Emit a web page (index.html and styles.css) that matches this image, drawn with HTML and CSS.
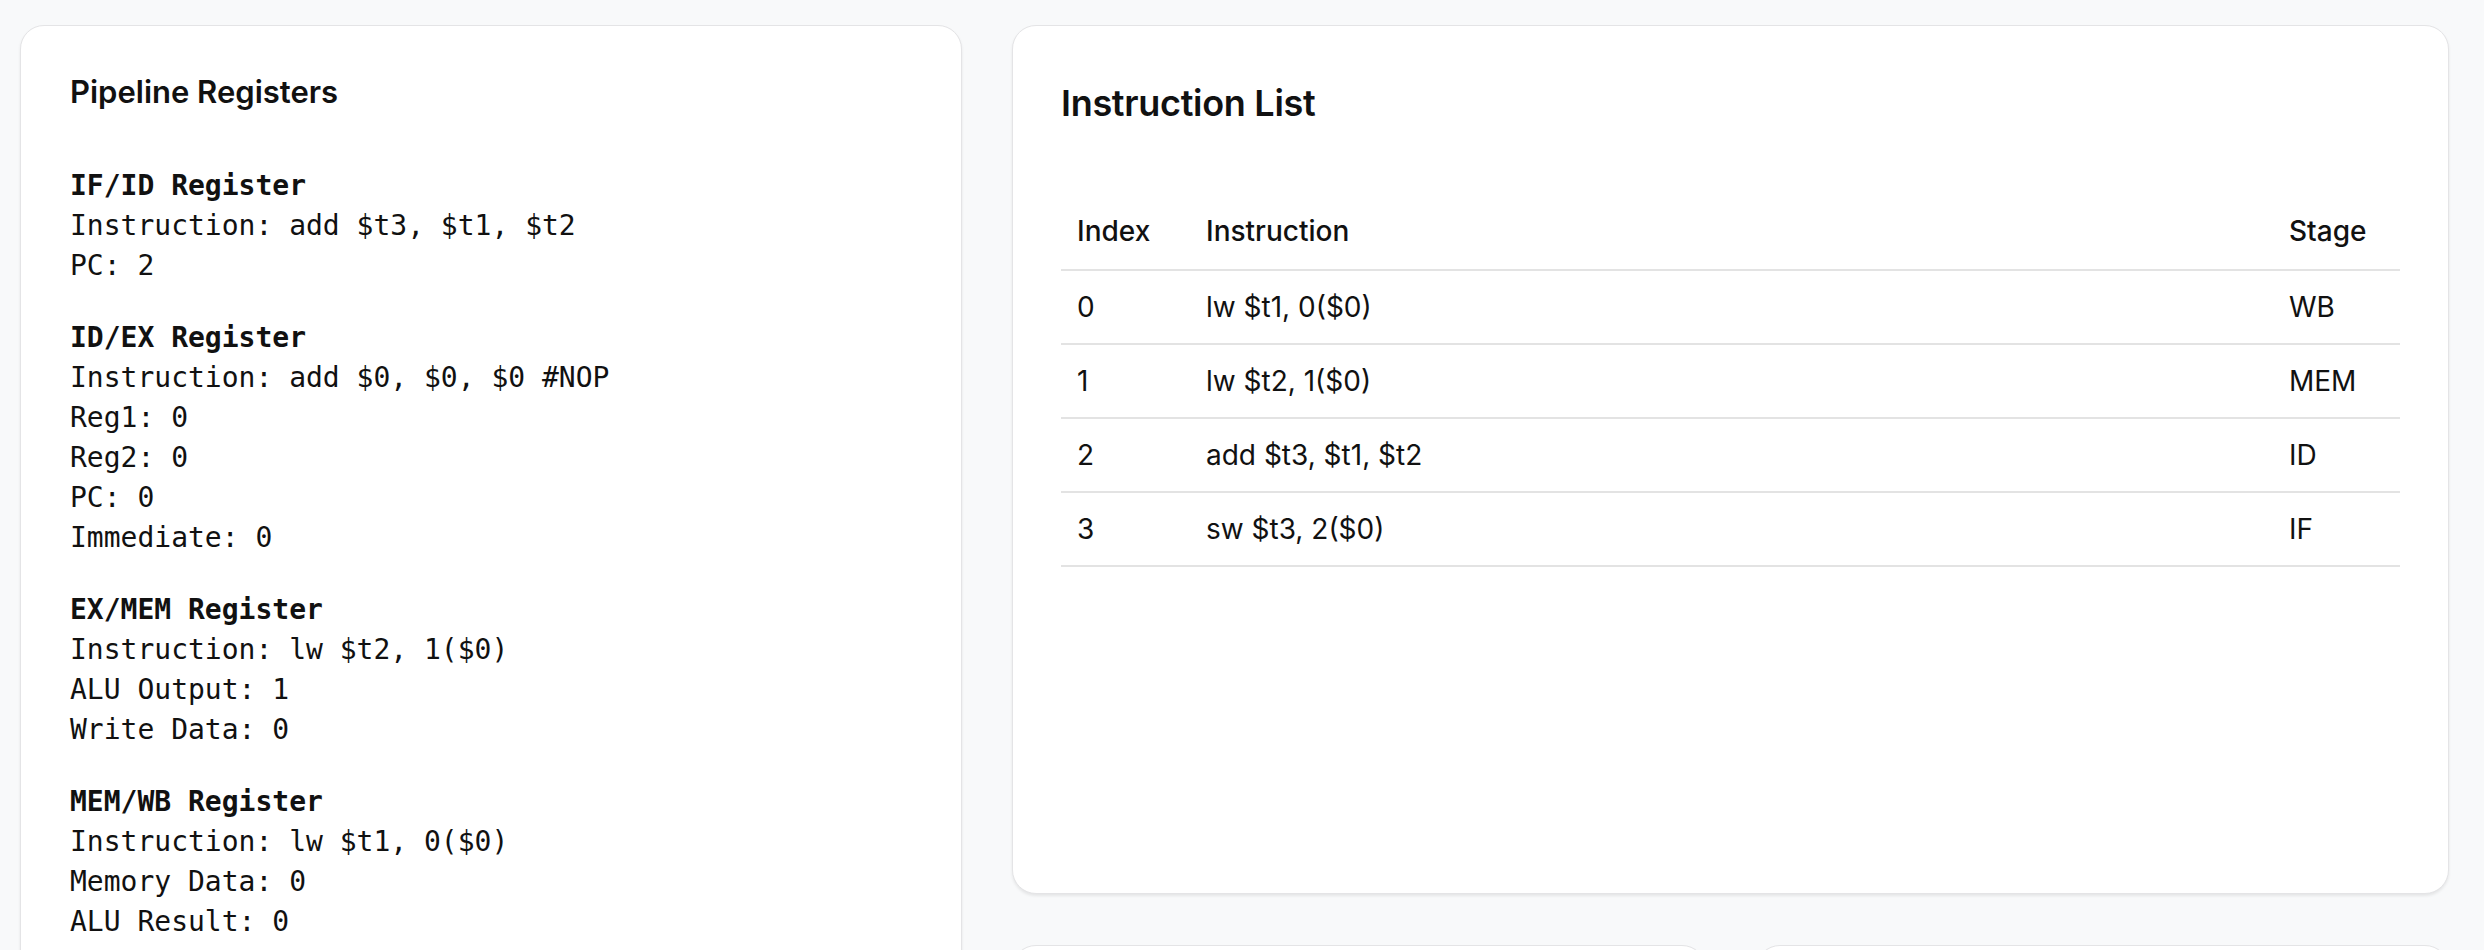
FILE: index.html
```html
<!DOCTYPE html>
<html lang="en">
<head>
<meta charset="utf-8">
<title>Pipeline Simulator</title>
<link rel="stylesheet" href="styles.css">
</head>
<body>
<main class="layout">
  <section class="card registers">
    <h3 class="card-title-sm">Pipeline Registers</h3>
    <div class="reg-group">
      <div class="reg-name">IF/ID Register</div>
      <div class="reg-line">Instruction: add $t3, $t1, $t2</div>
      <div class="reg-line">PC: 2</div>
    </div>
    <div class="reg-group">
      <div class="reg-name">ID/EX Register</div>
      <div class="reg-line">Instruction: add $0, $0, $0 #NOP</div>
      <div class="reg-line">Reg1: 0</div>
      <div class="reg-line">Reg2: 0</div>
      <div class="reg-line">PC: 0</div>
      <div class="reg-line">Immediate: 0</div>
    </div>
    <div class="reg-group">
      <div class="reg-name">EX/MEM Register</div>
      <div class="reg-line">Instruction: lw $t2, 1($0)</div>
      <div class="reg-line">ALU Output: 1</div>
      <div class="reg-line">Write Data: 0</div>
    </div>
    <div class="reg-group">
      <div class="reg-name">MEM/WB Register</div>
      <div class="reg-line">Instruction: lw $t1, 0($0)</div>
      <div class="reg-line">Memory Data: 0</div>
      <div class="reg-line">ALU Result: 0</div>
    </div>
  </section>

  <div class="right-col">
    <section class="card instructions">
      <h2 class="card-title">Instruction List</h2>
      <table class="inst-table">
        <thead>
          <tr><th class="col-index">Index</th><th>Instruction</th><th class="col-stage">Stage</th></tr>
        </thead>
        <tbody>
          <tr><td>0</td><td>lw $t1, 0($0)</td><td>WB</td></tr>
          <tr><td>1</td><td>lw $t2, 1($0)</td><td>MEM</td></tr>
          <tr><td>2</td><td>add $t3, $t1, $t2</td><td>ID</td></tr>
          <tr><td>3</td><td>sw $t3, 2($0)</td><td>IF</td></tr>
        </tbody>
      </table>
    </section>
    <div class="bottom-row">
      <section class="card small-card"></section>
      <section class="card small-card"></section>
    </div>
  </div>
</main>
</body>
</html>
```

FILE: styles.css
```css
* { box-sizing: border-box; }

html, body {
  margin: 0;
  padding: 0;
  background: #f8f9fa;
  color: #111;
  font-family: Inter, "Noto Sans", sans-serif;
}

.layout {
  display: grid;
  grid-template-columns: 942px 1437px;
  column-gap: 50px;
  padding: 25px 35px 40px 20px;
  align-items: start;
}

.card {
  background: #fff;
  border: 1px solid #e4e4e6;
  border-radius: 24px;
  box-shadow: 0 2px 3px rgba(0, 0, 0, 0.08);
}

.registers {
  padding: 48px 49px 60px;
}

.card-title-sm {
  margin: 0 0 57px;
  font-size: 31px;
  line-height: 35px;
  font-weight: 600;
}

.reg-group {
  font-family: "DejaVu Sans Mono", "Liberation Mono", monospace;
  font-size: 28px;
  line-height: 40px;
  margin-bottom: 32px;
}

.reg-name { font-weight: bold; }

.right-col {
  display: flex;
  flex-direction: column;
  gap: 51px;
}

.instructions {
  min-height: 869px;
  padding: 56px 48px 40px 48px;
}

.card-title {
  margin: 0 0 73px;
  font-size: 36px;
  line-height: 43px;
  font-weight: 600;
  letter-spacing: -0.3px;
}

.inst-table {
  width: 100%;
  border-collapse: collapse;
  font-size: 28px;
}

.inst-table th,
.inst-table td {
  text-align: left;
  padding: 19px 16px;
  line-height: 34px;
  border-bottom: 2px solid #e3e3e3;
}

.inst-table th {
  font-weight: 500;
  padding-top: 16px;
  padding-bottom: 21px;
}

.col-index { width: 129px; }
.col-stage { width: 127px; }

.bottom-row {
  display: grid;
  grid-template-columns: 1fr 1fr;
  column-gap: 50px;
}

.small-card {
  min-height: 320px;
}
```
